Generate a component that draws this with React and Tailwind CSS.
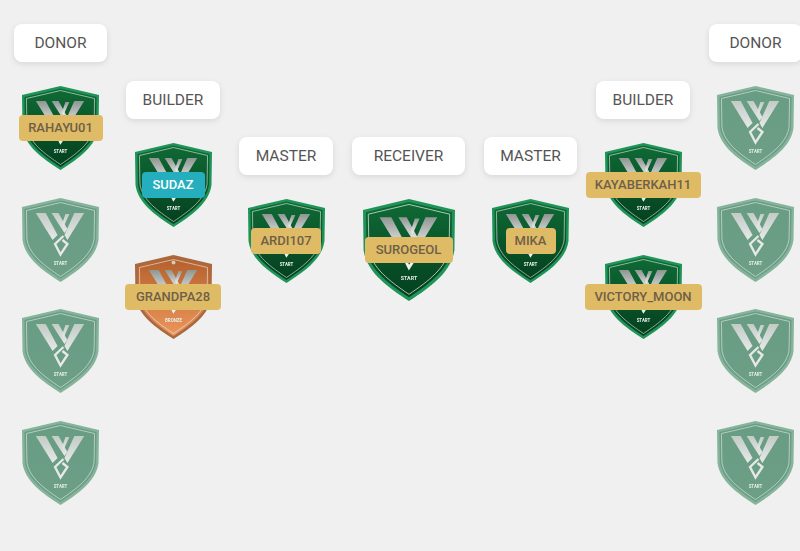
import { useId } from "react";

const font = { fontFamily: "Roboto, sans-serif" };

const columns = [
  {
    role: "DONOR",
    width: "w-[93px]",
    top: "pt-[24px]",
    members: [{ name: "RAHAYU01", badge: "w-[84px]" }, {}, {}, {}],
  },
  {
    role: "BUILDER",
    width: "w-[94px]",
    top: "pt-[81px]",
    members: [
      { name: "SUDAZ", badge: "w-[63px]", teal: true },
      { name: "GRANDPA28", badge: "w-[96px]", bronze: true },
    ],
  },
  { role: "MASTER", width: "w-[94px]", top: "pt-[137px]", members: [{ name: "ARDI107", badge: "w-[70px]" }] },
  {
    role: "RECEIVER",
    width: "w-[113px]",
    top: "pt-[137px]",
    big: true,
    members: [{ name: "SUROGEOL", badge: "w-[88px]" }],
  },
  { role: "MASTER", width: "w-[93px]", top: "pt-[137px]", members: [{ name: "MIKA", badge: "w-[50px]" }] },
  {
    role: "BUILDER",
    width: "w-[94px]",
    top: "pt-[81px]",
    members: [
      { name: "KAYABERKAH11", badge: "w-[115px]" },
      { name: "VICTORY_MOON", badge: "w-[117px]" },
    ],
  },
  { role: "DONOR", width: "w-[93px]", top: "pt-[24px]", members: [{}, {}, {}, {}] },
];

function Shield({ bronze, empty, big }) {
  const id = useId();
  let top = "#0f6a35";
  let bottom = "#04401f";
  let edge = "#1f9458";
  let markFrom = "#8f9692";
  let markTo = "#f2f2f2";
  if (bronze) {
    top = "#b4602c";
    bottom = "#ec965c";
    edge = "#a9683f";
  }
  if (empty) {
    top = "#689c83";
    bottom = "#6d9f87";
    edge = "#86b39b";
    markFrom = "#c3cbc7";
    markTo = "#e6e9e7";
  }
  return (
    <svg
      viewBox="0 0 78 84"
      preserveAspectRatio="none"
      className={`block blur-[0.3px] ${big ? "w-[92px] h-[102px]" : "w-[77px] h-[84px]"}`}
    >
      <defs>
        <linearGradient id={`${id}bg`} x1="0" y1="0" x2="0" y2="1">
          <stop offset="0" stopColor={top} />
          <stop offset="1" stopColor={bottom} />
        </linearGradient>
        <linearGradient id={`${id}mark`} x1="0" y1="0" x2="0" y2="1">
          <stop offset="0" stopColor={markFrom} />
          <stop offset="1" stopColor={markTo} />
        </linearGradient>
      </defs>
      <path d="M39 0 L78 9 L77.5 42 C75 60 58 72 39 84 C20 72 3 60 0.5 42 L0 9 Z" fill={edge} />
      <path d="M39 2.5 L75.5 11 L75 41.5 C73 58 56 70 39 81 C22 70 5 58 3 41.5 L2.5 11 Z" fill={`url(#${id}bg)`} />
      <path
        d="M39 4.5 L73.5 12.5 L73 41 C71 56.5 55 68 39 78.5 C23 68 7 56.5 5 41 L4.5 12.5 Z"
        fill="none"
        stroke="#e6eee9"
        strokeWidth="0.6"
      />
      {bronze && <circle cx="39" cy="7.5" r="2" fill="#d9c9bb" />}
      <g fill={`url(#${id}mark)`}>
        <polygon points="14,15 24,15 36,37 31,42" />
        <polygon points="30,15 37,15 46,31 43,35" />
        <polygon points="44,16 48,16 42,29 40.5,26" />
        <polygon points="53,15 63,15 46,42 43,37" />
      </g>
      <path d="M42 38 L33.5 46 L39 56.5 L46 46 L41 42" fill="none" stroke={markTo} strokeWidth="2.4" />
      <text x="39" y="67" textAnchor="middle" fontSize="4.5" fontWeight="700" fill="#e5ece8" style={font}>
        {bronze ? "BRONZE" : "START"}
      </text>
    </svg>
  );
}

function Member({ name, badge, teal, bronze, big, empty }) {
  return (
    <div className="relative flex justify-center">
      <Shield bronze={bronze} empty={empty} big={big} />
      {name && (
        <div
          className={`absolute ${big ? "top-[38px]" : "top-[29px]"} ${badge} h-[26px] flex items-center justify-center rounded-[4px] text-[13px] font-medium whitespace-nowrap ${
            teal ? "bg-[#25aebd] text-white" : "bg-[#e0bb66] text-[#6e6048]"
          }`}
        >
          {name}
        </div>
      )}
    </div>
  );
}

export default function App() {
  return (
    <div className="w-[800px] h-[551px] overflow-hidden bg-[#f0f0f0] flex items-start gap-[19px] pl-[14px]" style={font}>
      {columns.map((col, i) => (
        <div key={i} className={`${col.width} ${col.top} shrink-0 flex flex-col items-center`}>
          <div className="w-full h-[38px] pt-px mb-[24px] flex items-center justify-center rounded-lg bg-white text-[15.5px] text-[#555] shadow-[0_2px_6px_rgba(0,0,0,0.1)]">
            {col.role}
          </div>
          <div className="flex flex-col items-center gap-[27.5px]">
            {col.members.map((m, j) => (
              <Member key={j} {...m} big={col.big} empty={!m.name} />
            ))}
          </div>
        </div>
      ))}
    </div>
  );
}
